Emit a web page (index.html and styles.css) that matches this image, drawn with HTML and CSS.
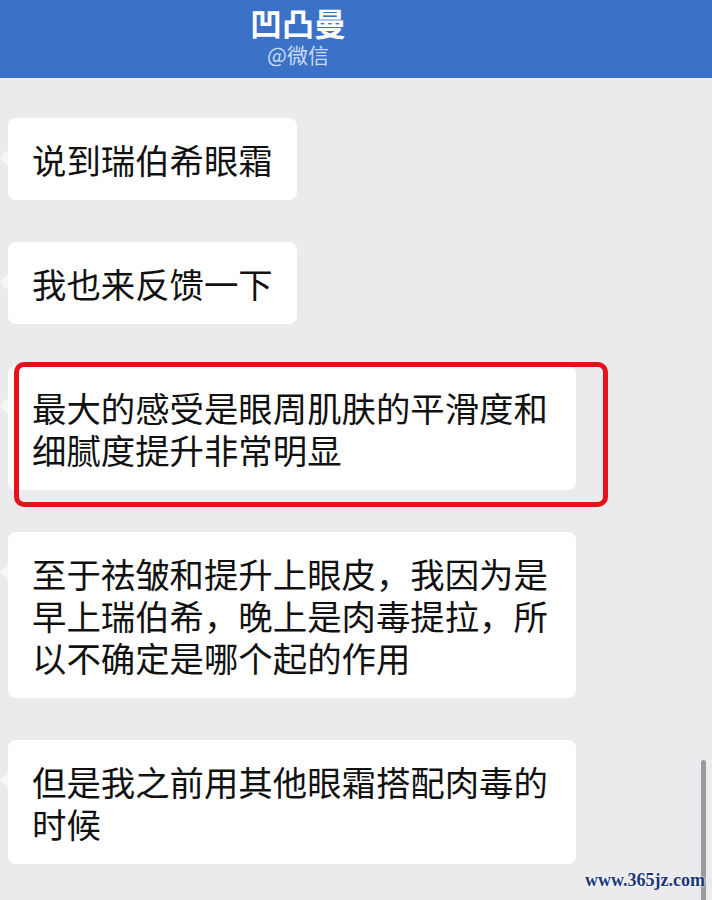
FILE: index.html
```html
<!DOCTYPE html>
<html lang="zh-CN">
  <head>
    <meta charset="UTF-8">
    <meta name="viewport" content="width=device-width, initial-scale=1.0">
    <title>凹凸曼</title>
    <link rel="stylesheet" href="styles.css">
  </head>
<body>
  <header class="topbar">
    <h1 class="title">凹凸曼</h1>
    <div class="subtitle">@微信</div>
  </header>

  <div class="chat">
    <div class="bubble">说到瑞伯希眼霜</div>
    <div class="bubble">我也来反馈一下</div>
    <div class="marked">
      <div class="bubble">最大的感受是眼周肌肤的平滑度和细腻度提升非常明显</div>
    </div>
    <div class="bubble">至于祛皱和提升上眼皮，我因为是早上瑞伯希，晚上是肉毒提拉，所以不确定是哪个起的作用</div>
    <div class="bubble">但是我之前用其他眼霜搭配肉毒的时候</div>
  </div>

  <div class="scrollbar"></div>
  <div class="watermark">www.365jz.com</div>
</body>
</html>
```

FILE: styles.css
```css
/* page */
body {
  font-family: "Noto Sans CJK SC", "Noto Sans", sans-serif;
  background-color: #ebebee;
  margin: 0;
  height: 900px;
  overflow: hidden;
  position: relative;
}

/* blue title bar */
.topbar {
  background-color: #3b71c6;
  color: #fff;
  height: 78px;
  padding: 0 116px 0 0;
  box-sizing: border-box;
  text-align: center;
}

.title {
  margin: 0;
  font-size: 32px;
  line-height: 44px;
  font-weight: 700;
}

.subtitle {
  font-size: 21px;
  line-height: 20px;
  color: #c9dcf5;
}

/* message list */
.chat {
  display: flex;
  flex-direction: column;
  align-items: flex-start;
  gap: 42px;
  padding: 40px 0 0 8px;
}

.bubble {
  position: relative;
  background-color: #fff;
  border-radius: 8px;
  max-width: 520px;
  padding: 20px 24px;
  font-size: 34.4px;
  line-height: 42px;
  color: #111;
}

/* little tail on the left */
.bubble::before {
  content: "";
  position: absolute;
  left: -8px;
  top: 32px;
  border-top: 8px solid transparent;
  border-bottom: 8px solid transparent;
  border-right: 8px solid #f7f7f8;
}

/* red highlight box */
.marked {
  position: relative;
}

.marked::after {
  content: "";
  position: absolute;
  left: 6px;
  top: -4px;
  width: 594px;
  height: 145px;
  border: 5px solid #e5121a;
  border-radius: 10px;
  box-sizing: border-box;
}

.scrollbar {
  position: absolute;
  right: 6px;
  top: 760px;
  width: 5px;
  height: 150px;
  border-radius: 3px;
  background-color: #9a9a9e;
}

.watermark {
  position: absolute;
  right: 7px;
  bottom: 9px;
  font-family: "Liberation Serif", serif;
  font-size: 18px;
  font-weight: 700;
  color: #173878;
  text-shadow: 0 0 2px #fff, 0 0 2px #fff;
}
```
